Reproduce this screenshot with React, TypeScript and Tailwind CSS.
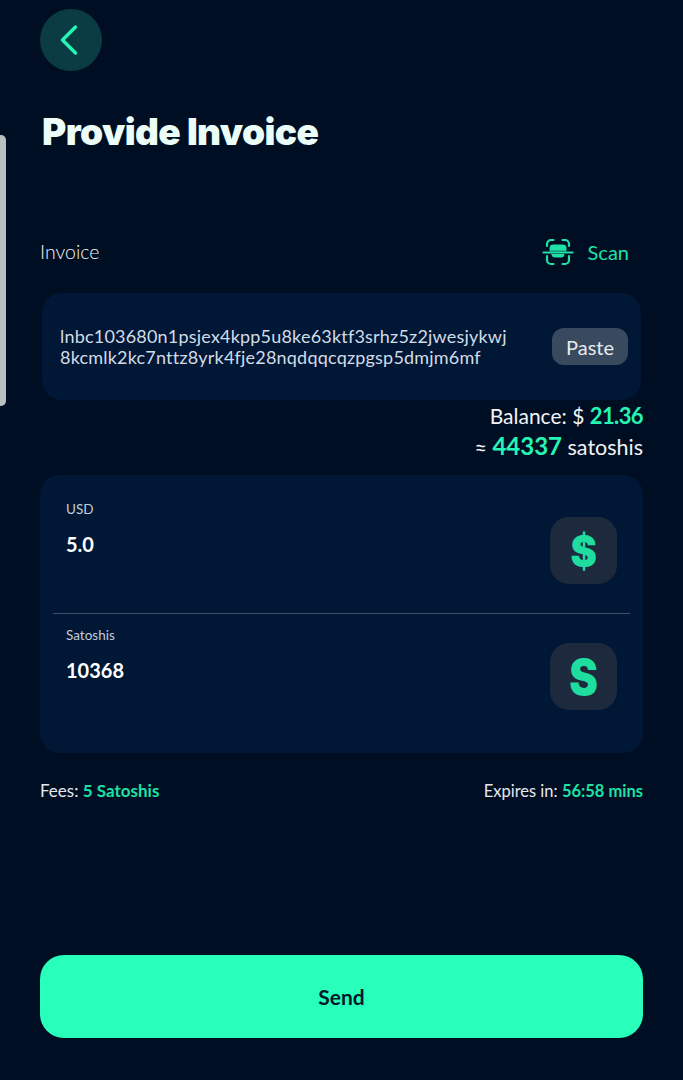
import { ChevronLeft } from 'lucide-react'

const font = { fontFamily: 'Lato, "Noto Sans", sans-serif' }

function ScanIcon() {
  return (
    <svg width="32" height="28" viewBox="0 0 32 28" fill="none" stroke="#1fe0a5" strokeWidth="2.2" strokeLinecap="round" className="block">
      <path d="M5 8V6a4 4 0 0 1 4-4h2.5" />
      <path d="M27 8V6a4 4 0 0 0-4-4h-2.5" />
      <path d="M5 18v4a4 4 0 0 0 4 4h2.5" />
      <path d="M27 18v4a4 4 0 0 1-4 4h-2.5" />
      <path d="M1.5 14.5h29" />
      <path d="M8 12.5V9.5A2.5 2.5 0 0 1 10.5 7h11A2.5 2.5 0 0 1 24 9.5v3z" fill="#1fe0a5" strokeWidth="1" />
      <path d="M10 16.5h12a2.5 2.5 0 0 1-2.5 2.5h-7a2.5 2.5 0 0 1-2.5-2.5z" fill="#1fe0a5" strokeWidth="1" />
    </svg>
  )
}

function AmountRow({ label, value, glyph, glyphClass }: { label: string, value: string, glyph: string, glyphClass: string }) {
  return (
    <div className="flex justify-between items-start pl-[26px] pr-[26px]">
      <div>
        <p className="text-[13.5px] leading-[18px] text-[#c3ccd8]">{label}</p>
        <p className="mt-[13px] text-[20px] leading-[26px] font-bold text-white">{value}</p>
      </div>
      <div className="w-[67px] h-[67px] rounded-[19px] bg-[#1d2a3e] flex items-center justify-center mt-[17px]">
        <span className={`leading-none font-black font-['Inter',sans-serif] text-[#1fdc9f] ${glyphClass}`}>{glyph}</span>
      </div>
    </div>
  )
}

export default function App() {
  return (
    <div style={font} className="relative w-[683px] h-[1080px] overflow-hidden bg-[#000e23] text-white px-10">
      {/* scrollbar sliver on the left edge */}
      <div className="absolute left-0 top-[135px] w-[6px] h-[271px] rounded-r-[5px] bg-[#b9bfc3]" />

      <div className="pt-[9px]">
        <button className="w-[62px] h-[62px] rounded-full bg-[#0b3b43] flex items-center justify-center">
          <ChevronLeft className="w-[52px] h-[52px] text-[#25f5b4] -ml-[4px]" strokeWidth={1.6} />
        </button>
      </div>

      <h1 className="mt-[37px] ml-[2px] text-[37px] leading-[48px] font-black text-[#ecfdf8] font-['Inter',sans-serif] tracking-[-0.6px]">Provide Invoice</h1>

      <div className="mt-[81px] flex items-center justify-between h-[30px] pr-[14px]">
        <span className="text-[19.5px] font-light text-[#f2f5f8]">Invoice</span>
        <div className="flex items-center gap-[14px]">
          <ScanIcon />
          <span className="text-[20px] text-[#1fe0a5]">Scan</span>
        </div>
      </div>

      <div className="mt-[26px] mx-[2px] h-[107px] rounded-[20px] bg-[#011736] flex items-center justify-between pl-[18px] pr-[13px]">
        <p className="w-[470px] text-[18px] leading-[21px] text-[#d3dce6] break-all tracking-[0.2px]">
          lnbc103680n1psjex4kpp5u8ke63ktf3srhz5z2jwesjykwj
          <br />
          8kcmlk2kc7nttz8yrk4fje28nqdqqcqzpgsp5dmjm6mf
        </p>
        <span className="w-[76px] h-[37px] rounded-[12px] bg-[#3a4a5e] flex items-center justify-center text-[20px] text-[#e6ebef]">Paste</span>
      </div>

      <div className="mt-[1px] text-right">
        <p className="text-[21px] leading-[30px] text-[#f2f4f6]">
          Balance: $ <span className="text-[22px] font-bold text-[#25f5b4] tracking-[-0.6px]">21.36</span>
        </p>
        <p className="text-[21.5px] leading-[30px] text-[#f2f4f6]">
          ≈ <span className="text-[24px] font-bold text-[#25f5b4]">44337</span> satoshis
        </p>
      </div>

      <div className="mt-[13px] h-[278px] rounded-[20px] bg-[#011736] flex flex-col pt-[25px]">
        <AmountRow label="USD" value="5.0" glyph="$" glyphClass="text-[44px] scale-x-[0.9]" />
        <div className="mx-[13px] mt-[29px] mb-[12px] h-px bg-[#3d4f68]" />
        <AmountRow label="Satoshis" value="10368" glyph="S" glyphClass="text-[50px] scale-x-[0.86]" />
      </div>

      <div className="mt-[27px] flex justify-between leading-[22px] text-[#e4e8ec]">
        <span className="text-[17px]">Fees: <span className="font-bold text-[#1fe0a5]">5 Satoshis</span></span>
        <span className="text-[16.5px]">Expires in: <span className="font-bold text-[#1fe0a5]">56:58 mins</span></span>
      </div>

      <button className="mt-[153px] w-full h-[83px] rounded-[24px] bg-[#27ffba] text-[21px] font-bold text-[#03182a] flex items-center justify-center">
        Send
      </button>
    </div>
  )
}
